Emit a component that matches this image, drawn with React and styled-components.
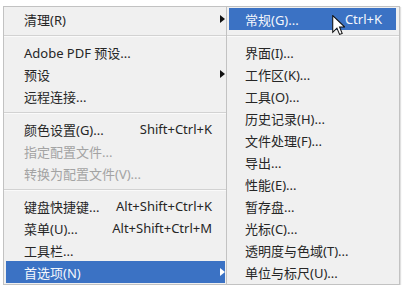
import React from 'react';
import styled, { createGlobalStyle } from 'styled-components';

const mainItems = [
  { label: '清理(R)', arrow: true },
  { sep: true },
  { label: 'Adobe PDF 预设...' },
  { label: '预设', arrow: true },
  { label: '远程连接...' },
  { sep: true },
  { label: '颜色设置(G)...', shortcut: 'Shift+Ctrl+K' },
  { label: '指定配置文件...', disabled: true },
  { label: '转换为配置文件(V)...', disabled: true },
  { sep: true },
  { label: '键盘快捷键...', shortcut: 'Alt+Shift+Ctrl+K' },
  { label: '菜单(U)...', shortcut: 'Alt+Shift+Ctrl+M' },
  { label: '工具栏...' },
  { label: '首选项(N)', arrow: true, active: true },
];

const subItems = [
  { label: '常规(G)...', shortcut: 'Ctrl+K', active: true },
  { sep: true },
  { label: '界面(I)...' },
  { label: '工作区(K)...' },
  { label: '工具(O)...' },
  { label: '历史记录(H)...' },
  { label: '文件处理(F)...' },
  { label: '导出...' },
  { label: '性能(E)...' },
  { label: '暂存盘...' },
  { label: '光标(C)...' },
  { label: '透明度与色域(T)...' },
  { label: '单位与标尺(U)...' },
];

function Menu({ items, width, indent, right }) {
  return (
    <Panel $width={width}>
      {items.map((it, i) =>
        it.sep ? (
          <Separator key={i} />
        ) : (
          <Item key={i} $active={it.active} $disabled={it.disabled} $indent={indent} $right={right}>
            <Label>{it.label}</Label>
            {it.shortcut && <Shortcut>{it.shortcut}</Shortcut>}
            {it.arrow && <Arrow $active={it.active} />}
          </Item>
        )
      )}
    </Panel>
  );
}

export default function App() {
  return (
    <>
      <GlobalStyle />
      <Page>
        <Menu items={mainItems} width={226} indent={18} right={13} />
        <SubWrap>
          <Menu items={subItems} width={174} indent={16} right={14} />
          <Cursor viewBox="0 0 12 20" width="13" height="21">
            <path
              d="M0.5 0.5 L0.5 16.5 L4.5 12.5 L7 18.5 L9.5 17.5 L7 11.5 L12 11.5 Z"
              fill="#fff"
              stroke="#111"
              strokeWidth="1"
              strokeLinejoin="miter"
            />
          </Cursor>
        </SubWrap>
      </Page>
    </>
  );
}

const GlobalStyle = createGlobalStyle`
  body {
    margin: 0;
    background: #fff;
    font-family: "Noto Sans", "Noto Sans CJK SC", sans-serif;
  }
`;

const Page = styled.div`
  display: flex;
  align-items: flex-start;
  padding: 6px 0 0 3px;
`;

const SubWrap = styled.div`
  position: relative;
  margin-left: -3px;
`;

const Panel = styled.div`
  width: ${p => p.$width}px;
  box-sizing: border-box;
  background: #f0f0f0;
  border: 1px solid #c2c2c2;
  box-shadow: 1px 1px 1px rgba(0, 0, 0, 0.12);
  padding: 1px 3px 1px 2px;
`;

const Item = styled.div`
  display: flex;
  align-items: center;
  height: 22px;
  padding: 0 ${p => p.$right}px 0 ${p => p.$indent}px;
  font-size: 13px;
  color: ${p => (p.$active ? '#f4f7fc' : p.$disabled ? '#a3a3a3' : '#262626')};
  background: ${p => (p.$active ? '#3b72c4' : 'transparent')};
  position: relative;
  white-space: nowrap;
`;

const Label = styled.span`
  flex: 1;
`;

const Shortcut = styled.span`
  margin-left: 12px;
`;

const Arrow = styled.span`
  position: absolute;
  right: 0;
  top: 7px;
  width: 0;
  height: 0;
  border-top: 4px solid transparent;
  border-bottom: 4px solid transparent;
  border-left: 5px solid ${p => (p.$active ? '#fff' : '#111')};
`;

const Separator = styled.div`
  height: 11px;
  margin: 0 -3px 0 -2px;
  display: flex;
  flex-direction: column;
  justify-content: center;

  &::before {
    content: "";
    display: block;
    height: 1px;
    background: #d2d2d2;
    border-bottom: 1px solid #fafafa;
  }
`;

const Cursor = styled.svg`
  position: absolute;
  left: 106px;
  top: 9px;
`;
